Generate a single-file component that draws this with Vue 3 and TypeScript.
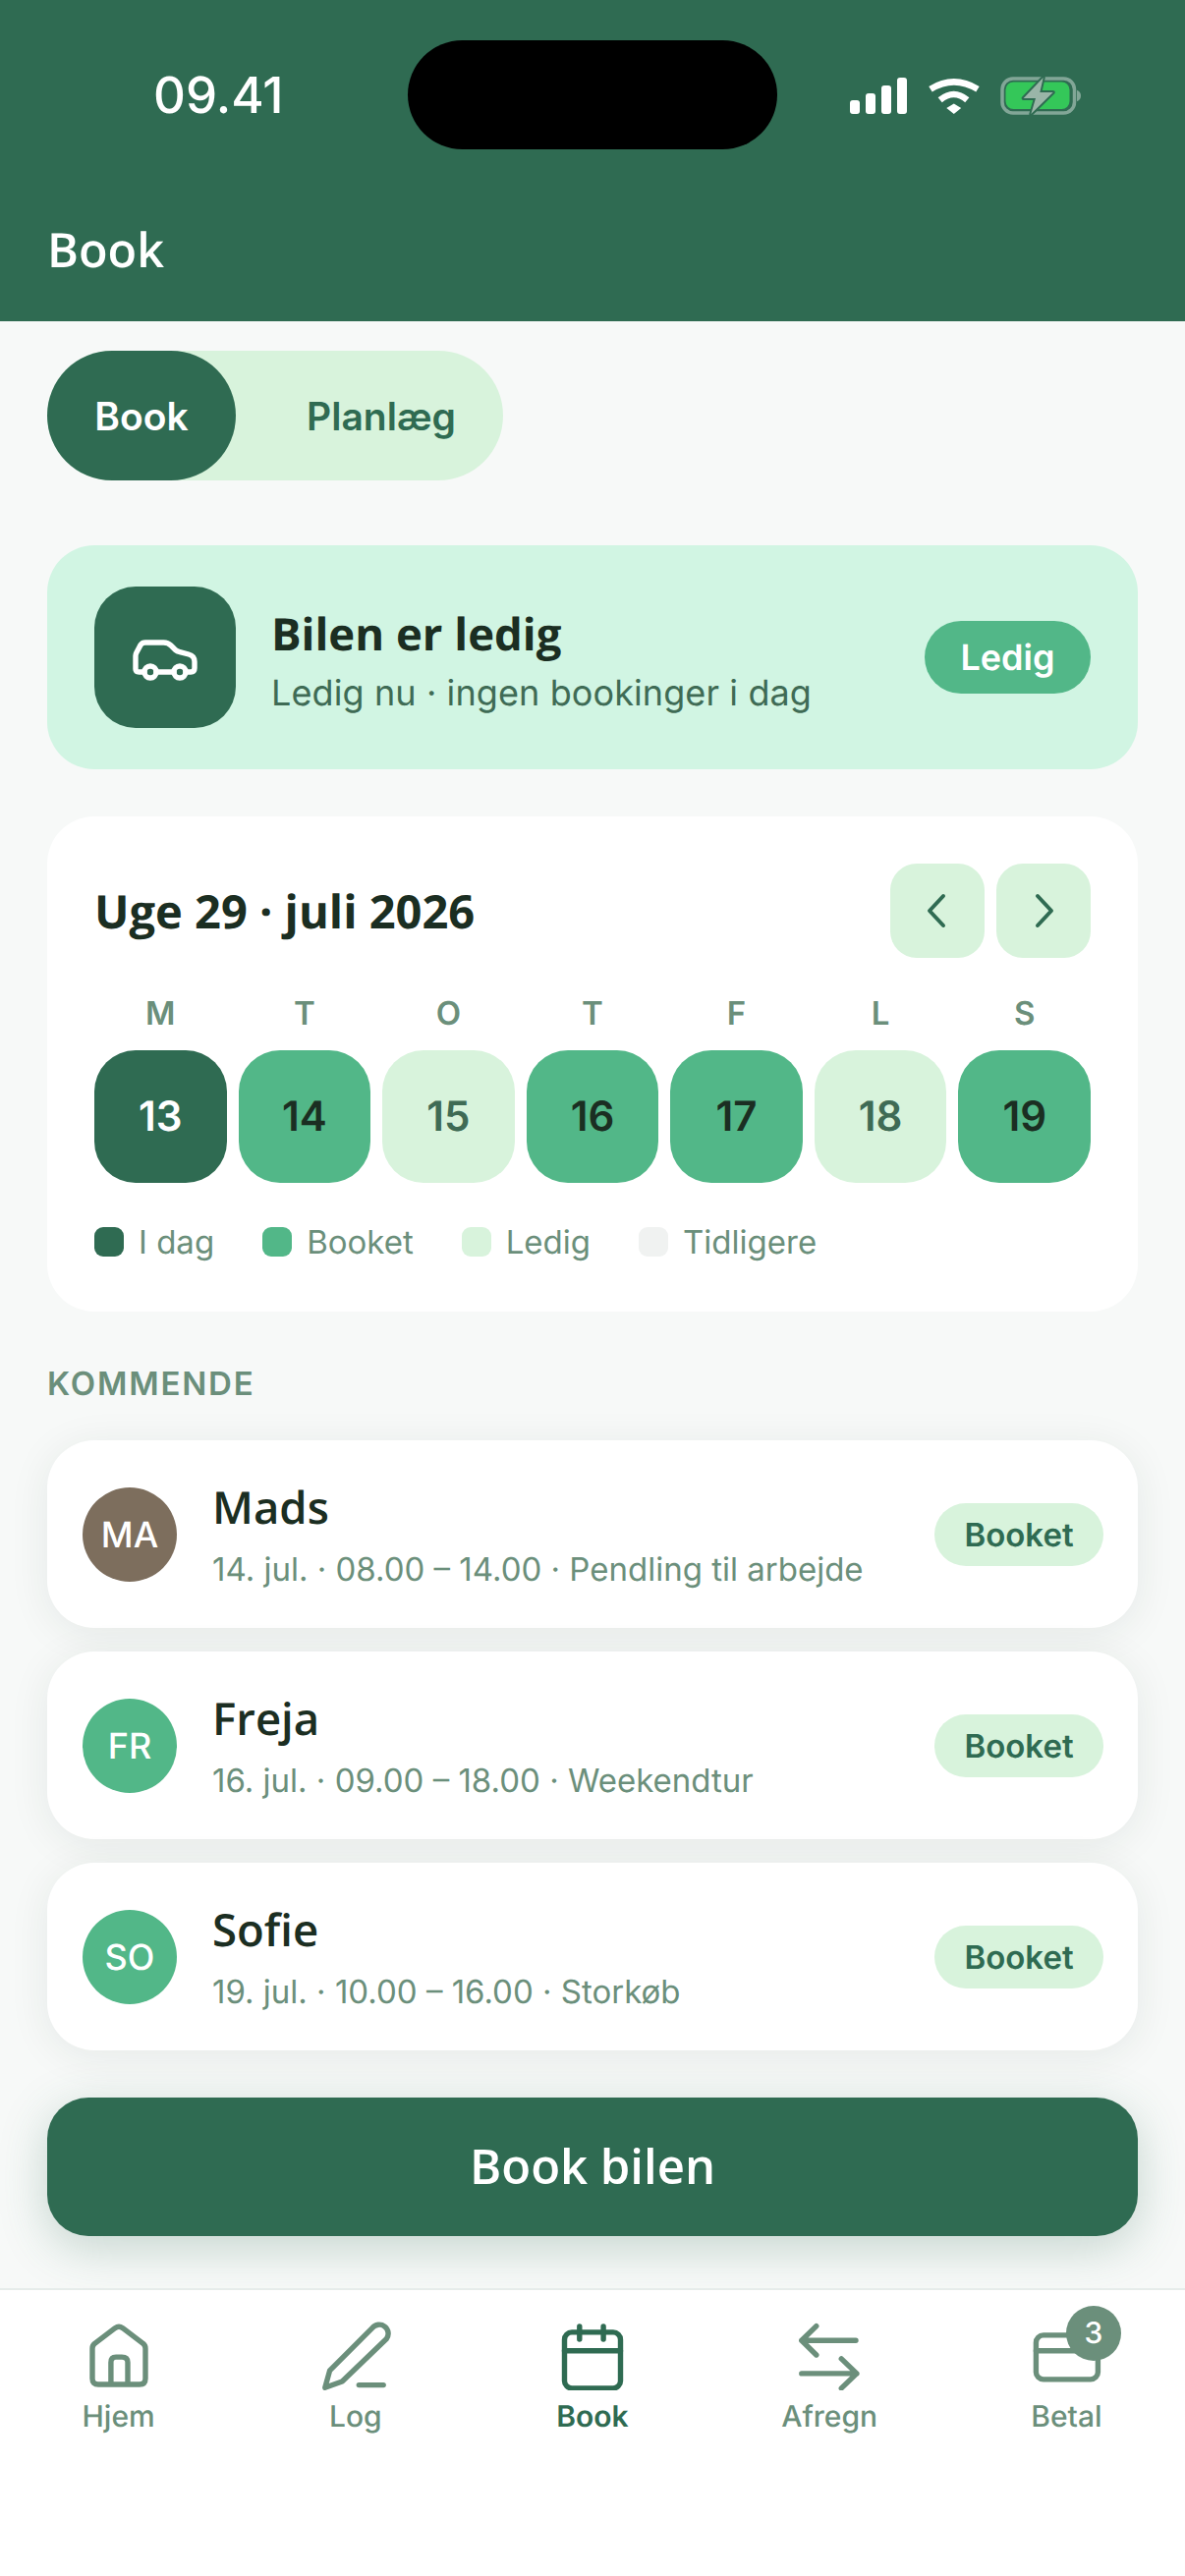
<template>
  <div class="screen">
    <header class="top">
      <div class="status">
        <span class="time">09.41</span>
        <div class="island"></div>
        <svg class="status-icons" width="235" height="40" viewBox="0 0 235 40">
          <g fill="#fff">
            <rect x="0" y="24" width="10" height="14" rx="3" />
            <rect x="16" y="17" width="10" height="21" rx="3" />
            <rect x="32" y="9" width="10" height="29" rx="3" />
            <rect x="48" y="1" width="10" height="37" rx="3" />
            <polygon points="98.3,32 105.8,27.5 113.2,32 105.8,38" />
          </g>
          <path d="M82 12.7Q105.8-2 130 12.7M91.7 23.7Q105.8 12.3 119.3 23.7" fill="none" stroke="#fff" stroke-width="6.5" />
          <rect x="155" y="2" width="73.5" height="35" rx="11" fill="none" stroke="#fff" stroke-opacity=".4" stroke-width="3.5" />
          <rect x="158.5" y="5.5" width="65" height="27.5" rx="8" fill="#34c759" />
          <path d="M231 13.7q4 1.5 4 5.8t-4 5.8z" fill="#fff" fill-opacity=".4" />
          <polygon points="196.7,1 176.7,22 189,22 184.3,38 206.7,16 193.3,16" fill="#9ab5a8" stroke="#2f6b52" stroke-width="4" paint-order="stroke" stroke-linejoin="round" />
        </svg>
      </div>
      <h1 class="title">Book</h1>
    </header>

    <main class="content">
      <div class="segment">
        <button class="seg-btn active">Book</button>
        <button class="seg-btn">Planlæg</button>
      </div>

      <section class="status-card">
        <div class="car-box">
          <svg width="72" height="72" viewBox="0 0 24 24" fill="none" stroke="#fff" stroke-width="1.8" stroke-linecap="round" stroke-linejoin="round">
            <path d="M5 17H3.2Q2 17 2 16V11.5Q2 11 2.3 10.4L3.7 7.8Q4.3 7 5.3 7H11.5Q13 7 14 8L15.5 9.5Q16 10 17 10.2L20 11Q22 11.5 22 13.5V15.7Q22 17 20.7 17H19M9 17H15" />
            <circle cx="7" cy="17" r="2" />
            <circle cx="17" cy="17" r="2" />
          </svg>
        </div>
        <div class="status-text">
          <div class="status-title">Bilen er ledig</div>
          <div class="status-sub">Ledig nu · ingen bookinger i dag</div>
        </div>
        <span class="status-badge">Ledig</span>
      </section>

      <section class="calendar">
        <div class="cal-head">
          <h2 class="cal-title">Uge 29 · juli 2026</h2>
          <div class="cal-nav">
            <button class="nav-btn">
              <svg width="48" height="48" viewBox="0 0 24 24" fill="none" stroke="#2f6b52" stroke-width="2" stroke-linecap="round" stroke-linejoin="round"><path d="M15 4.5L8 12L15 19.5" /></svg>
            </button>
            <button class="nav-btn">
              <svg width="48" height="48" viewBox="0 0 24 24" fill="none" stroke="#2f6b52" stroke-width="2" stroke-linecap="round" stroke-linejoin="round"><path d="M9 4.5L16 12L9 19.5" /></svg>
            </button>
          </div>
        </div>
        <div class="week">
          <span v-for="(d, i) in weekdays" :key="i" class="weekday">{{ d }}</span>
          <span v-for="day in days" :key="day.num" class="day" :class="day.kind">{{ day.num }}</span>
        </div>
        <div class="legend">
          <span v-for="item in legend" :key="item.label" class="legend-item">
            <i class="swatch" :class="item.kind"></i>{{ item.label }}
          </span>
        </div>
      </section>

      <h3 class="section-label">KOMMENDE</h3>

      <div class="bookings">
        <article v-for="b in bookings" :key="b.name" class="booking">
          <div class="avatar" :class="{ brown: b.brown }">{{ b.initials }}</div>
          <div class="booking-text">
            <div class="booking-name">{{ b.name }}</div>
            <div class="booking-meta">{{ b.meta }}</div>
          </div>
          <span class="booking-badge">Booket</span>
        </article>
      </div>

      <button class="cta">Book bilen</button>
    </main>

    <nav class="tabs">
      <div class="tab">
        <svg class="tab-icon" viewBox="0 0 24 24">
          <path d="M3 9.8Q3 8.8 3.7 8.2L10.7 2.9Q12 2 13.3 2.9L20.3 8.2Q21 8.8 21 9.8V20Q21 22 19 22H5Q3 22 3 20ZM9.3 22V14.5Q9.3 12.7 11 12.7H13Q15 12.7 15 14.5V22" />
        </svg>
        <span>Hjem</span>
      </div>
      <div class="tab">
        <svg class="tab-icon" viewBox="0 0 24 24">
          <path d="M3.2 17.3L17.6 2.9A3 3 0 0 1 22.4 6.6L7.4 21L1.6 23.1ZM13.1 22.2H21.4" />
        </svg>
        <span>Log</span>
      </div>
      <div class="tab current">
        <svg class="tab-icon" viewBox="0 0 24 24">
          <rect x="2.5" y="4.3" width="19" height="19" rx="2.5" />
          <path d="M2.5 10.6H21.5M7.6 2.3V6.7M15.7 2.3V6.7" />
        </svg>
        <span>Book</span>
      </div>
      <div class="tab">
        <svg class="tab-icon" viewBox="0 0 24 24">
          <path d="M21 7.1H2.6M7.6 2.2L2.6 7.1L7.6 12M2.6 18.3H21.3M16.1 13.3L21.3 18.3L16.1 23.3" />
        </svg>
        <span>Afregn</span>
      </div>
      <div class="tab">
        <svg class="tab-icon" viewBox="0 0 24 24">
          <rect x="1.8" y="5.3" width="21" height="15" rx="2.5" />
          <path d="M1.8 10.6H22.8" />
        </svg>
        <span class="tab-badge">3</span>
        <span>Betal</span>
      </div>
    </nav>
  </div>
</template>

<script setup lang="ts">
interface Day {
  num: number
  kind: 'today' | 'booked' | 'free'
}

interface Booking {
  name: string
  initials: string
  meta: string
  brown?: boolean
}

const weekdays = ['M', 'T', 'O', 'T', 'F', 'L', 'S']

const days: Day[] = [
  { num: 13, kind: 'today' },
  { num: 14, kind: 'booked' },
  { num: 15, kind: 'free' },
  { num: 16, kind: 'booked' },
  { num: 17, kind: 'booked' },
  { num: 18, kind: 'free' },
  { num: 19, kind: 'booked' },
]

const legend = [
  { label: 'I dag', kind: 'today' },
  { label: 'Booket', kind: 'booked' },
  { label: 'Ledig', kind: 'free' },
  { label: 'Tidligere', kind: 'past' },
]

const bookings: Booking[] = [
  { name: 'Mads', initials: 'MA', meta: '14. jul. · 08.00 – 14.00 · Pendling til arbejde', brown: true },
  { name: 'Freja', initials: 'FR', meta: '16. jul. · 09.00 – 18.00 · Weekendtur' },
  { name: 'Sofie', initials: 'SO', meta: '19. jul. · 10.00 – 16.00 · Storkøb' },
]
</script>

<style>
html,
body {
  margin: 0;
  background: #fff;
}
</style>

<style scoped>
.screen {
  width: 1206px;
  height: 2622px;
  display: flex;
  flex-direction: column;
  overflow: hidden;
  background: #f7f9f8;
  font-family: Inter, "Liberation Sans", sans-serif;
  color: #1b2e22;
  text-rendering: geometricPrecision;
}

.top {
  height: 327px;
  flex: none;
  background: #2f6b52;
  color: #fff;
}

.status {
  position: relative;
  height: 224px;
}

.time {
  position: absolute;
  left: 156px;
  top: 68px;
  font-size: 51px;
  line-height: 60px;
  font-weight: 500;
}

.island {
  position: absolute;
  left: 415px;
  top: 41px;
  width: 376px;
  height: 111px;
  border-radius: 56px;
  background: #000;
}

.status-icons {
  position: absolute;
  left: 865px;
  top: 78px;
}

.title {
  margin: 0 0 0 48px;
  font-family: "Open Sans", sans-serif;
  font-size: 48.5px;
  line-height: 60px;
  font-weight: 600;
}

.content {
  flex: 1;
  padding: 30px 48px 0;
}

.segment {
  display: inline-flex;
  width: 464px;
  height: 132px;
  border-radius: 66px;
  background: #d8f3dc;
}

.seg-btn {
  border: 0;
  padding: 0 0 0 24px;
  background: none;
  border-radius: 66px;
  color: #2f6b52;
  font-family: Inter, sans-serif;
  font-size: 39px;
  font-weight: 600;
  flex: 1;
}

.seg-btn.active {
  flex: none;
  width: 192px;
  padding: 0;
  background: #2f6b52;
  color: #fff;
}

.status-card {
  height: 228px;
  box-sizing: border-box;
  margin-top: 66px;
  padding: 0 48px;
  display: flex;
  align-items: center;
  border-radius: 48px;
  background: #d1f5e3;
}

.car-box {
  width: 144px;
  height: 144px;
  flex: none;
  display: flex;
  align-items: center;
  justify-content: center;
  border-radius: 42px;
  background: #2f6b52;
}

.status-text {
  flex: 1;
  margin-left: 36px;
  padding-top: 7px;
}

.status-title {
  font-family: "Open Sans", sans-serif;
  font-size: 45.5px;
  line-height: 54px;
  font-weight: 700;
}

.status-sub {
  margin-top: 11px;
  font-size: 36px;
  line-height: 44px;
  letter-spacing: 0.1px;
  color: #3f6b55;
}

.status-badge {
  width: 169px;
  height: 74px;
  display: flex;
  align-items: center;
  justify-content: center;
  border-radius: 37px;
  background: #52b788;
  color: #fff;
  font-size: 36px;
  font-weight: 600;
}

.calendar {
  height: 504px;
  box-sizing: border-box;
  margin-top: 48px;
  padding: 48px;
  border-radius: 48px;
  background: #fff;
}

.cal-head {
  display: flex;
  align-items: center;
  justify-content: space-between;
}

.cal-title {
  margin: 0;
  font-family: "Open Sans", sans-serif;
  font-size: 47px;
  line-height: 58px;
  font-weight: 700;
}

.cal-nav {
  display: flex;
  gap: 12px;
}

.nav-btn {
  width: 96px;
  height: 96px;
  padding: 0;
  display: flex;
  align-items: center;
  justify-content: center;
  border: 0;
  border-radius: 27px;
  background: #d8f3dc;
}

.week {
  display: grid;
  grid-template-columns: repeat(7, 1fr);
  column-gap: 12px;
  row-gap: 18px;
  margin-top: 36px;
}

.weekday {
  text-align: center;
  font-size: 33px;
  line-height: 40px;
  font-weight: 600;
  color: #6b8f7b;
}

.day {
  height: 135px;
  display: flex;
  align-items: center;
  justify-content: center;
  border-radius: 42px;
  font-size: 42px;
  font-weight: 600;
}

.day.today {
  background: #2f6b52;
  color: #fff;
}

.day.booked {
  background: #52b788;
  color: #1b2e22;
}

.day.free {
  background: #d8f3dc;
  color: #3f6b55;
}

.legend {
  display: flex;
  gap: 49px;
  margin-top: 40px;
}

.legend-item {
  display: flex;
  align-items: center;
  gap: 15px;
  font-size: 33px;
  line-height: 40px;
  color: #6b8f7b;
}

.swatch {
  width: 30px;
  height: 30px;
  border-radius: 9px;
}

.swatch.today {
  background: #2f6b52;
}

.swatch.booked {
  background: #52b788;
}

.swatch.free {
  background: #d8f3dc;
}

.swatch.past {
  background: #f0f2f1;
}

.section-label {
  margin: 53px 0 0;
  font-size: 33px;
  line-height: 40px;
  font-weight: 600;
  letter-spacing: 1.8px;
  color: #6b8f7b;
}

.bookings {
  display: flex;
  flex-direction: column;
  gap: 24px;
  margin-top: 38px;
}

.booking {
  height: 191px;
  box-sizing: border-box;
  padding: 0 36px;
  display: flex;
  align-items: center;
  border-radius: 48px;
  background: #fff;
  box-shadow: 0 6px 42px rgba(27, 46, 34, 0.08);
}

.avatar {
  width: 96px;
  height: 96px;
  flex: none;
  display: flex;
  align-items: center;
  justify-content: center;
  border-radius: 50%;
  background: #52b788;
  color: #fff;
  font-size: 36px;
  font-weight: 500;
}

.avatar.brown {
  background: #7d6e5d;
}

.booking-text {
  flex: 1;
  margin-left: 36px;
}

.booking-name {
  font-family: "Open Sans", sans-serif;
  font-size: 45.5px;
  line-height: 54px;
  font-weight: 600;
}

.booking-meta {
  margin-top: 16px;
  font-size: 33px;
  line-height: 40px;
  color: #6b8f7b;
}

.booking-badge {
  width: 172px;
  height: 64px;
  margin-right: -1px;
  display: flex;
  align-items: center;
  justify-content: center;
  border-radius: 32px;
  background: #d8f3dc;
  color: #2f6b52;
  font-size: 33px;
  font-weight: 600;
}

.cta {
  display: block;
  width: 100%;
  height: 141px;
  margin-top: 48px;
  padding-bottom: 4px;
  border: 0;
  border-radius: 42px;
  background: #2f6b52;
  color: #fff;
  font-family: "Open Sans", sans-serif;
  font-size: 49px;
  font-weight: 600;
  box-shadow: 0 12px 48px rgba(47, 107, 82, 0.25);
}

.tabs {
  position: relative;
  height: 293px;
  flex: none;
  box-sizing: border-box;
  display: grid;
  grid-template-columns: repeat(5, 1fr);
  align-items: start;
  padding-top: 30px;
  background: #fff;
  border-top: 2px solid #e6ecea;
}

.tab {
  position: relative;
  display: flex;
  flex-direction: column;
  align-items: center;
  gap: 9px;
  font-size: 30px;
  line-height: 36px;
  font-weight: 500;
  color: #6b8f7b;
}

.tab.current {
  color: #2f6b52;
  font-weight: 600;
}

.tab-icon {
  width: 72px;
  height: 72px;
  fill: none;
  stroke: currentColor;
  stroke-width: 1.8;
  stroke-linecap: round;
  stroke-linejoin: round;
}

.tab-badge {
  position: absolute;
  left: 120px;
  top: -14px;
  width: 56px;
  height: 56px;
  display: flex;
  align-items: center;
  justify-content: center;
  border-radius: 50%;
  background: #6b8f7b;
  color: #fff;
  font-size: 30px;
}
</style>
